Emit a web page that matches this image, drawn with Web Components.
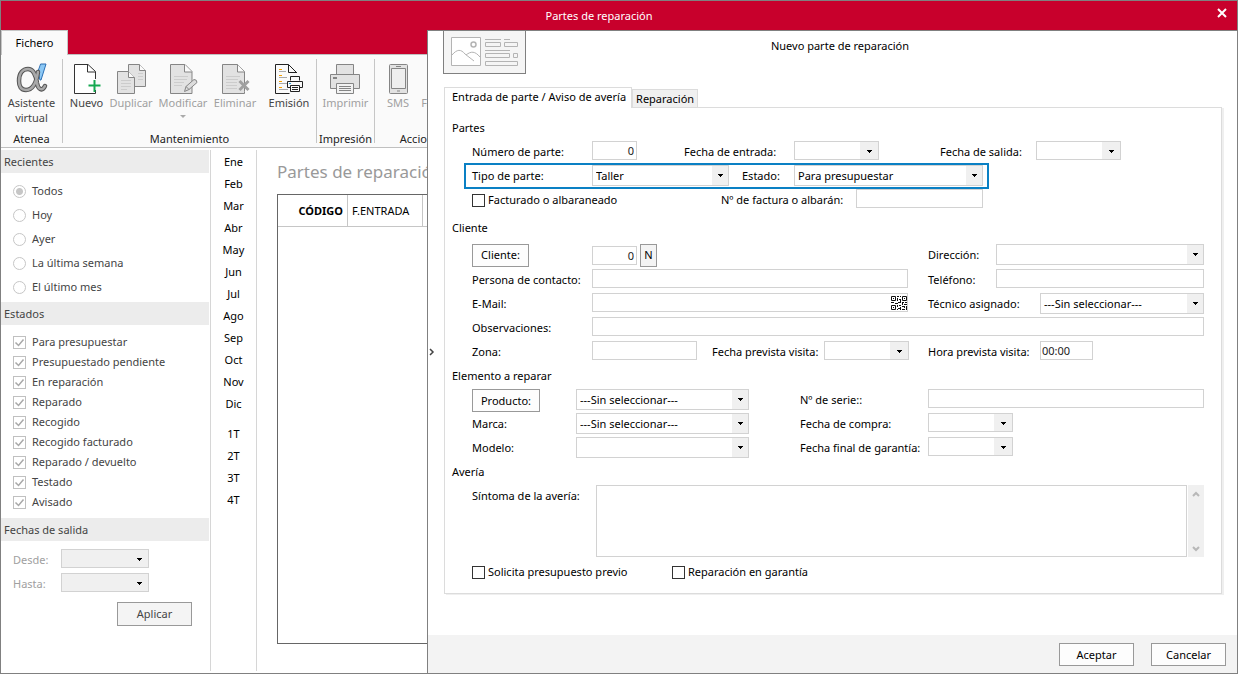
<!DOCTYPE html>
<html lang="es">
<head>
<meta charset="utf-8">
<title>Partes de reparación</title>
<style>
html, body { margin: 0; }
body { font: 11px/16px "Noto Sans", "Open Sans", sans-serif; color: #000; background: #fff; }
</style>
</head>
<body>
<app-window></app-window>

<script>
const define = (name, html, setup) => {
  const template = document.createElement('template');
  template.innerHTML = html;
  customElements.define(name, class extends HTMLElement {
    connectedCallback() {
      if (this.shadowRoot) return;
      this.attachShadow({ mode: 'open' }).append(template.content.cloneNode(true));
      if (setup) setup(this, this.shadowRoot);
    }
  });
};

/* Push button */
define('ui-button', `
<style>
:host { display: inline-block; width: 75px; }
button { display: block; box-sizing: border-box; width: 100%; height: var(--height, 23px); padding: 0; font: inherit; color: inherit;
  background: var(--face, #fdfdfd); border: 1px solid #999; white-space: nowrap; }
</style>
<button type="button"><slot></slot></button>`);

/* Labelled text box or drop-down */
define('ui-field', `
<style>
:host { display: flex; flex-shrink: 0; align-items: flex-start; min-width: 0; }
label { flex: none; width: var(--label, 120px); line-height: 24px; white-space: nowrap; }
label[hidden] { display: none; }
.box { display: grid; flex: var(--grow, none); width: var(--width, 85px); min-width: 0; margin-top: 1px; }
.box > * { grid-area: 1 / 1; }
input, select { appearance: none; box-sizing: border-box; width: 100%; min-width: 0; height: 19px; margin: 0; padding: 0 3px; font: inherit;
  color: #000; opacity: 1; background: var(--fill, #fff); border: 1px solid #d2d2d2; border-radius: 0; outline: 0; }
input.num { text-align: right; padding: 0 2px; color: #222; }
input.time { padding: 0 1px; color: #222; }
select.tall { height: 21px; }
svg { justify-self: end; width: 18px; height: 17px; margin: 1px; background: #f0f0f0; pointer-events: none; }
select.tall + svg { width: 16px; height: 19px; }
slot { display: flex; justify-self: end; }
</style>
<label for="c"></label>
<div class="box"></div>`, (el, root) => {
  const label = root.querySelector('label');
  const box = root.querySelector('.box');
  const kind = el.getAttribute('kind') || 'text';
  if (el.hasAttribute('label')) label.textContent = el.getAttribute('label');
  else label.hidden = true;
  const value = el.getAttribute('value') || '';
  if (kind === 'select' || kind === 'date') {
    const size = kind === 'select' ? '16 19' : '18 17';
    const start = kind === 'select' ? '6 8' : '7 8';
    box.innerHTML = `<select id="c"><option></option></select>
      <svg viewBox="0 0 ${size}"><path d="M${start}h5v1h-1v1h-1v1h-1v-1h-1v-1h-1z"/></svg>`;
    box.querySelector('option').textContent = value;
    if (kind === 'select') box.querySelector('select').className = 'tall';
  } else {
    box.innerHTML = '<input id="c" type="text"><slot></slot>';
    box.querySelector('input').value = value;
    box.querySelector('input').className = kind;
  }
  const control = box.firstElementChild;
  if (el.hasAttribute('name')) control.setAttribute('aria-label', el.getAttribute('name'));
  if (el.hasAttribute('disabled')) control.disabled = true;
});

/* Tick box with its caption */
define('ui-check', `
<style>
:host { display: block; }
label { display: flex; align-items: center; gap: var(--gap, 3px); height: var(--row, 24px); white-space: nowrap; }
span { display: grid; flex: none; }
span > * { grid-area: 1 / 1; }
input { appearance: none; box-sizing: border-box; width: 13px; height: 13px; margin: 0; background: #fff; border: 1px solid var(--line, #333); }
svg { width: 13px; height: 13px; fill: none; stroke: #a8a8a8; stroke-width: 1.5; pointer-events: none; visibility: hidden; }
input:checked + svg { visibility: visible; }
</style>
<label><span><input type="checkbox"><svg viewBox="0 0 13 13"><path d="M2.500 6.500l3 3 5-6"/></svg></span><slot></slot></label>`,
(el, root) => { root.querySelector('input').checked = el.hasAttribute('checked'); });

/* Group of exclusive options */
define('ui-radios', `
<style>
:host { display: block; }
label { display: flex; align-items: center; gap: 6px; height: 24px; }
input { appearance: none; box-sizing: border-box; width: 13px; height: 13px; margin: 0; border: 1px solid #c6c6c6; border-radius: 50%; background: #fff; }
input:checked { background: radial-gradient(circle, #c6c6c6 3px, #fff 4px); }
</style>`, (el, root) => {
  el.getAttribute('options').split('|').forEach((text, i) => {
    const label = document.createElement('label');
    const input = document.createElement('input');
    input.type = 'radio'; input.name = 'r'; input.checked = i === 0;
    label.append(input, text);
    root.append(label);
  });
});

/* Ribbon button: picture over caption */
define('ribbon-button', `
<style>
:host { display: block; flex: none; }
button { display: flex; flex-direction: column; align-items: center; width: 100%; padding: 8px 0 0; font: inherit; line-height: 15px;
  color: #444; background: none; border: 0; white-space: nowrap; }
:host([disabled]) button { color: #a0a0a0; }
.icon { display: flex; justify-content: center; height: 32px; }
</style>
<button type="button"><span class="icon"><slot name="icon"></slot></span><span><slot></slot></span></button>`,
(el, root) => { root.querySelector('button').disabled = el.hasAttribute('disabled'); });

define('ribbon-group', `
<style>
:host { display: flex; flex: none; flex-direction: column; justify-content: space-between; box-sizing: border-box; border-right: 1px solid #c6c6c6; margin: 4px 0; }
div { display: flex; margin-top: -4px; }
h2 { margin: 0 0 -4px; font: inherit; color: #222; text-align: center; line-height: 17px; white-space: nowrap; }
</style>
<div><slot></slot></div><h2></h2>`, (el, root) => { root.querySelector('h2').textContent = el.getAttribute('caption'); });

define('app-ribbon', `
<style>
:host { display: block; }
nav { display: flex; height: 24px; background: #c8002c; }
nav button { width: 67px; height: 25px; padding: 0; position: relative; font: inherit; background: #fafafa; border: 1px solid #c6c6c6; border-bottom: 0; z-index: 1; }
.groups { display: flex; box-sizing: border-box; height: 94px; overflow: hidden; background: #fafafa; border: 1px solid #c0c0c0; border-width: 1px 0; }
hr { width: 1px; height: 59px; margin: 10px 0 0 6px; border: 0; background: #ddd; }
.drop { display: block; margin: 5px auto 0; }
svg { overflow: visible; }
</style>
<nav><button type="button">Fichero</button></nav>
<div class="groups">
  <ribbon-group caption="Atenea" style="width:62px">
    <ribbon-button style="width:61px">
      <svg slot="icon" width="30" height="30" viewBox="0 0 30 30" fill="none" stroke-linecap="round">
        <path d="M24 1h5l-5 16h-1l-2-8z" fill="#8cc8f5" stroke="#2a6fb5"/>
        <path d="M21 9C19 22 15 27 9 27C4 27 2 23 2 18C2 10 6 6 11 6C17 6 19 13 20 20C21 26 25 29 28 23" stroke="#555" stroke-width="4.500"/>
        <path d="M21 9C19 22 15 27 9 27C4 27 2 23 2 18C2 10 6 6 11 6C17 6 19 13 20 20C21 26 25 29 28 23" stroke="#a9a9a9" stroke-width="2.500"/>
      </svg>Asistente<br>virtual
    </ribbon-button>
  </ribbon-group>
  <ribbon-group caption="Mantenimiento" style="width:254px">
    <ribbon-button style="width:47px">
      <svg slot="icon" width="28" height="31" viewBox="0 0 28 31" fill="none"><path d="M22.500 16V8.500L15 1.500H1.500v29h21V27" fill="#fff" stroke="#333"/><path d="M14.500 1.500v7.500h8" stroke="#333"/><path d="M21.500 17v12M15.500 22.500h12" stroke="#14a850" stroke-width="2"/></svg>Nuevo
    </ribbon-button>
    <ribbon-button disabled style="width:42px">
      <svg slot="icon" width="29" height="31" viewBox="0 0 29 31" fill="#e2e2e2" stroke="#858585"><path d="M11.500 1.500h11l6 6v16h-17z"/><path d="M22.500 1.500v6h6" fill="#fafafa"/><path d="M21 10.500h5M21 13.500h5M21 16.500h5" stroke="#ccc"/><path d="M.5 8.500h11l6 6v16H.5z"/><path d="M11.500 8.500v6h6" fill="#fafafa"/><path d="M4 17.500h10M4 20.500h10M4 23.500h10M4 26.500h6" stroke="#ccc"/></svg>Duplicar
    </ribbon-button>
    <ribbon-button disabled style="width:62px">
      <svg slot="icon" width="26" height="31" viewBox="0 0 26 31" fill="#e2e2e2" stroke="#858585"><path d="M.5 1.500H15l7 7v22H.5z"/><path d="M14.500 1.500V9H22" fill="#fafafa"/><path d="M4 13.500h14M4 16.500h13M4 19.500h10M4 22.500h8" stroke="#ccc"/><path d="M14.500 28.500l1.500-5 8-7q3 0 3 3l-8 7z" fill="#ddd"/><path d="M16 23.500l3 3" /></svg>Modificar<svg class="drop" width="6" height="3" viewBox="0 0 6 3"><path d="M0 0h6L3 3z" fill="#aaa"/></svg>
    </ribbon-button>
    <ribbon-button disabled style="width:42px">
      <svg slot="icon" width="26" height="31" viewBox="0 0 26 31" fill="#e2e2e2" stroke="#858585"><path d="M22.500 17V8.500l-7-7H.5v29h22v-2z"/><path d="M15.500 1.500V9h7" fill="#fafafa"/><path d="M4 13.500h14M4 16.500h12M4 19.500h11M4 22.500h11M4 25.500h11" stroke="#ccc"/><path d="M17.500 18l9 9M26.500 18l-9 9" stroke="#a0a0a0" stroke-width="3"/></svg>Eliminar
    </ribbon-button>
    <hr>
    <ribbon-button style="width:54px">
      <svg slot="icon" width="28" height="31" viewBox="0 0 28 31" fill="none" stroke="#222"><path d="M22 10L13.500 1.500H.5v29h14M13.500 1.500v8H22"/><path d="M4 6.500h3M4 12.500h3M4 18.500h3M4 24.500h3" stroke="#f5a000"/><path d="M4 8.500h7M4 14.500h8M4 20.500h8M4 26.500h9" stroke="#aaa"/><path d="M15.500 17.500v-4h9v4M12.500 24.500v-6h15v6h-3M15.500 24.500h-3M15.500 22.500h9v6h-9zM17 24.500h6M17 26.500h6"/><path d="M14 20.500h2" stroke="#28a0dc"/></svg>Emisión
    </ribbon-button>
  </ribbon-group>
  <ribbon-group caption="Impresión" style="width:58px">
    <ribbon-button disabled style="width:57px">
      <svg slot="icon" width="31" height="31" viewBox="0 0 31 31" fill="#e2e2e2" stroke="#858585"><path d="M6.500 1.500h17v10h-17zM.5 11.500h29v14H.5z"/><path d="M6.500 20.500h17v10h-17z" fill="#f2f2f2"/><path d="M3 15.500h4M3 14.500h4M9 23.500h12M9 25.500h12M9 27.500h12"/></svg>Imprimir
    </ribbon-button>
  </ribbon-group>
  <ribbon-group caption="Acciones" style="width:96px">
    <ribbon-button disabled style="width:46px">
      <svg slot="icon" width="19" height="31" viewBox="0 0 19 31" fill="#e2e2e2" stroke="#858585"><rect x=".5" y="1.500" width="18" height="29" rx="1"/><path d="M2.500 5.500h14v20h-14z" fill="#eee"/><path d="M7 3.500h5M8 28h3" /></svg>SMS
    </ribbon-button>
    <ribbon-button disabled style="width:18px"><svg slot="icon" width="1" height="31"></svg>Fax</ribbon-button>
  </ribbon-group>
</div>`);

define('filter-section', `
<style>
:host { display: block; color: #444; }
h3 { margin: 0; padding: 0 3px; font: inherit; line-height: 23px; background: #ececec; }
div { padding: var(--pad, 6px 12px 3px); }
</style>
<h3></h3><div><slot></slot></div>`, (el, root) => { root.querySelector('h3').textContent = el.getAttribute('caption'); });

define('filter-panel', `
<style>
:host { display: block; width: 208px; flex: none; }
ui-check { --line: #c0c0c0; --gap: 6px; --row: 20px; }
ui-field { --label: 48px; --width: 88px; --fill: #f0f0f0; color: #a0a0a0; }
.states { --pad: 7px 12px 6px; }
.dates { --pad: 7px 12px; }
ui-button { --face: #f4f4f4; --height: 24px; display: block; margin: 6px 0 0 104px; }
</style>
<filter-section caption="Recientes"><ui-radios options="Todos|Hoy|Ayer|La última semana|El último mes"></ui-radios></filter-section>
<filter-section caption="Estados" class="states">
  <ui-check checked>Para presupuestar</ui-check><ui-check checked>Presupuestado pendiente</ui-check><ui-check checked>En reparación</ui-check>
  <ui-check checked>Reparado</ui-check><ui-check checked>Recogido</ui-check><ui-check checked>Recogido facturado</ui-check>
  <ui-check checked>Reparado / devuelto</ui-check><ui-check checked>Testado</ui-check><ui-check checked>Avisado</ui-check>
</filter-section>
<filter-section caption="Fechas de salida" class="dates">
  <ui-field kind="date" label="Desde:" disabled></ui-field>
  <ui-field kind="date" label="Hasta:" disabled></ui-field>
  <ui-button>Aplicar</ui-button>
</filter-section>`);

define('period-list', `
<style>
:host { display: block; box-sizing: border-box; flex: none; width: 47px; margin: 0 0 2px 1px; padding-top: 1px; border: 1px solid #d6d6d6; border-width: 0 1px; }
ul { margin: 0 0 8px; padding: 0; list-style: none; }
a { display: block; line-height: 22px; text-align: center; color: #000; text-decoration: none; }
</style>`, (el, root) => {
  ['Ene Feb Mar Abr May Jun Jul Ago Sep Oct Nov Dic', '1T 2T 3T 4T'].forEach(set => {
    const list = document.createElement('ul');
    list.innerHTML = set.split(' ').map(t => `<li><a href="#${t}">${t}</a></li>`).join('');
    root.append(list);
  });
});

define('order-grid', `
<style>
:host { display: flex; flex-direction: column; flex: 1; min-width: 0; padding: 0 0 29px 20px; }
h1 { margin: 0; font-size: 17px; line-height: 43px; font-weight: 400; color: #999; white-space: nowrap; }
div { flex: 1; border: 1px solid #666; border-right: 0; margin-top: 1px; }
table { width: 100%; border-collapse: collapse; table-layout: fixed; }
th { height: 31px; padding: 0 4px; font-weight: 400; text-align: left; border: 1px solid #c6c6c6; border-width: 0 1px 1px 0; }
td { border-bottom: 1px solid #c6c6c6; padding: 0; }
th:first-child { width: 61px; text-align: right; font-weight: 700; }
th:nth-child(2) { width: 66px; }
</style>
<h1>Partes de reparación</h1>
<div><table><thead><tr><th>CÓDIGO</th><th>F.ENTRADA</th><td></td></tr></thead></table></div>`);

define('tab-panel', `
<style>
:host { display: block; }
nav { display: flex; align-items: flex-end; }
button { height: 18px; padding: 0 4px; font: inherit; background: #f0f0f0; border: 1px solid #dcdcdc; border-bottom: 0; white-space: nowrap; }
button + button { padding: 0 3px; }
button[aria-selected=true] { position: relative; height: 21px; margin-bottom: -1px; padding: 0 5px 2px 7px; background: #fff; }
section { padding: 8px 17px 9px 7px; border: 1px solid #dcdcdc; box-shadow: 2px 1px #efefef; }
</style>
<nav role="tablist"><button type="button" role="tab" aria-selected="true">Entrada de parte / Aviso de avería</button><button type="button" role="tab">Reparación</button></nav>
<section><slot></slot></section>`);

define('repair-form', `
<style>
:host { display: block; }
fieldset { margin: 0; padding: 0 0 0 20px; border: 0; min-width: 0; }
legend { margin-left: -20px; padding: 0; line-height: 24px; }
.first { margin-bottom: 4px; }
.row { display: flex; align-items: flex-start; min-height: 24px; }
.pair { display: grid; grid-template-columns: minmax(0, 436fr) minmax(0, 276fr); column-gap: 20px; }
.item { display: grid; grid-template-columns: minmax(0, 277fr) minmax(0, 404fr); column-gap: 51px; }
.tall { min-height: 26px; padding-top: 2px; align-items: center; }
.tall > div { display: flex; align-items: center; }
.fill { --grow: 1; }
.mark { position: relative; width: fit-content; margin-left: -7px; padding: 0 5px 0 7px; outline: 2px solid #0a80c4; outline-offset: -1px; background: #fff; z-index: 1; }
.short { --width: 45px; }
.right { --label: 68px; }
.wide { --label: 112px; }
.elem { --label: 104px; }
.serial { --label: 128px; }
.qr { width: 17px; height: 17px; margin: 1px 0; }
.memo { display: flex; min-height: 76px; }
.memo label { flex: none; width: 124px; line-height: 24px; }
.area { display: flex; flex: 1; gap: 1px; margin-top: 1px; height: 72px; }
textarea { flex: 1; box-sizing: border-box; margin: 0; padding: 3px; font: inherit; resize: none; border: 1px solid #d2d2d2; overflow: hidden; outline: 0; }
.bar { display: flex; flex-direction: column; justify-content: space-between; align-items: center; width: 16px; box-sizing: border-box; padding: 6px 0 5px; background: #f0f0f0; }
.bar svg { fill: none; stroke: #b8b8b8; stroke-width: 2; }
</style>
<fieldset class="first"><legend>Partes</legend>
  <div class="row">
    <ui-field kind="num" class="short" label="Número de parte:" value="0" style="margin-right:47px"></ui-field>
    <ui-field kind="date" label="Fecha de entrada:" style="--label:110px;margin-right:61px"></ui-field>
    <ui-field kind="date" label="Fecha de salida:" style="--label:96px"></ui-field>
  </div>
  <div class="row mark">
    <ui-field kind="select" label="Tipo de parte:" value="Taller" style="--width:137px;margin-right:13px"></ui-field>
    <ui-field kind="select" label="Estado:" value="Para presupuestar" style="--label:52px;--width:189px"></ui-field>
  </div>
  <div class="row">
    <ui-check style="width:249px">Facturado o albaraneado</ui-check>
    <ui-field label="Nº de factura o albarán:" style="--label:135px;--width:127px"></ui-field>
  </div>
</fieldset>
<fieldset><legend>Cliente</legend>
  <div class="pair tall">
    <div><ui-button style="width:57px;margin-right:63px">Cliente:</ui-button><ui-field kind="num" class="short" name="Cliente" value="0" style="margin-right:3px"></ui-field><ui-button style="width:17px;--face:#f4f4f4">N</ui-button></div>
    <ui-field kind="select" class="right fill" label="Dirección:"></ui-field>
  </div>
  <div class="row pair">
    <ui-field class="fill" label="Persona de contacto:"></ui-field>
    <ui-field class="right fill" label="Teléfono:"></ui-field>
  </div>
  <div class="row pair">
    <ui-field class="fill" label="E-Mail:"><svg class="qr" viewBox="0 -1 17 17" fill="none" stroke="#111"><path d="M.5 1.500h4v4h-4zM11.500 1.500h4v4h-4zM.5 10.500h4v4h-4zM2 3.500h1M13 3.500h1M2 12.500h1M6 1.500h2M9 1.500h1M6.500 3v3M8 4.500h2M9.500 5v3M0 7.500h3M4 8.500h3M7 7.500h2M11 7.500h2M14 7.500h2M11.500 8v2M13 9.500h3M6.500 10v2M8 10.500h2M7 13.500h2M6 14.500h1M9.500 12v3M11 11.500h2M13.500 11v2M15.500 11v4M11 14.500h3"/></svg></ui-field>
    <ui-field kind="select" class="wide fill" label="Técnico asignado:" value="---Sin seleccionar---"></ui-field>
  </div>
  <div class="row"><ui-field class="fill" label="Observaciones:" style="flex:1"></ui-field></div>
  <div class="row pair">
    <div class="row"><ui-field label="Zona:" style="--width:105px;margin-right:15px"></ui-field><ui-field kind="date" class="wide" label="Fecha prevista visita:"></ui-field></div>
    <ui-field kind="time" class="wide" label="Hora prevista visita:" value="00:00" style="--width:53px"></ui-field>
  </div>
</fieldset>
<fieldset><legend>Elemento a reparar</legend>
  <div class="row item">
    <div class="row"><ui-button style="width:68px;margin:1px 36px 0 0">Producto:</ui-button><ui-field kind="select" class="fill" name="Producto" value="---Sin seleccionar---" style="flex:1"></ui-field></div>
    <ui-field class="serial fill" label="Nº de serie::"></ui-field>
  </div>
  <div class="row item">
    <ui-field kind="select" class="elem fill" label="Marca:" value="---Sin seleccionar---"></ui-field>
    <ui-field kind="date" class="serial" label="Fecha de compra:"></ui-field>
  </div>
  <div class="row item">
    <ui-field kind="select" class="elem fill" label="Modelo:"></ui-field>
    <ui-field kind="date" class="serial" label="Fecha final de garantía:"></ui-field>
  </div>
</fieldset>
<fieldset><legend>Avería</legend>
  <div class="memo"><label for="memo">Síntoma de la avería:</label>
    <div class="area"><textarea id="memo"></textarea>
      <div class="bar"><svg width="8" height="6"><path d="M1 5l3-3 3 3"/></svg><svg width="8" height="6"><path d="M1 1l3 3 3-3"/></svg></div></div>
  </div>
  <div class="row"><ui-check style="width:200px">Solicita presupuesto previo</ui-check><ui-check>Reparación en garantía</ui-check></div>
</fieldset>`);

define('repair-dialog', `
<style>
:host { display: grid; grid-template: auto 1fr auto / 16px 1fr; min-width: 0; background: #fff; border: 1px solid #808080; border-width: 1px 0 0 1px; }
header { display: grid; grid-area: 1 / 2; height: 56px; margin-left: -1px; }
header > * { grid-area: 1 / 1; }
.card { justify-self: start; box-sizing: border-box; width: 83px; height: 43px; background: #f5f5f5; border: 1px solid #808080; border-top: 0; }
h2 { margin: 0; font: inherit; line-height: 30px; text-align: center; }
.handle { grid-area: 1 / 1 / 4 / 2; align-self: center; padding: 4px 1px; border: 0; background: none; justify-self: start; z-index: 1; }
.handle svg { display: block; }
main { grid-area: 2 / 2; padding: 0 15px 40px 0; }
footer { grid-area: 3 / 1 / 4 / 3; display: flex; justify-content: flex-end; gap: 17px; padding: 8px 11px 7px; background: #f3f3f3; }
</style>
<header>
  <svg class="card" viewBox="0 0 81 42" fill="none" stroke="#b4b4b4"><path d="M7.500 6.500h29v28h-29z" fill="#fff"/><circle cx="29.500" cy="13.500" r="2.500" stroke-width="1.500"/><path d="M8 24c5-6 9-6 13-1l9 7M22 24c5-4 9-4 14 2"/><path d="M41 8.500h16M60 8.500h6M41.500 11.500h15v4h-15zM60.500 11.500h13v4h-13zM41 19.500h25M41.500 22.500h24v4h-24zM69.500 22.500h4v4h-4zM41.500 30.500h32v4h-32z"/></svg>
  <h2>Nuevo parte de reparación</h2>
</header>
<button type="button" class="handle" aria-label="Plegar"><svg width="6" height="8" fill="none" stroke="#444" stroke-width="1.500"><path d="M1 1l3 3-3 3"/></svg></button>
<main><tab-panel><repair-form></repair-form></tab-panel></main>
<footer><ui-button>Aceptar</ui-button><ui-button>Cancelar</ui-button></footer>`);

define('app-window', `
<style>
:host { display: flex; flex-direction: column; box-sizing: border-box; min-height: 100vh; border: 1px solid #808080; background: #fff; }
header { display: flex; align-items: center; height: 29px; color: #fff; background: #c8002c; }
h1 { flex: 1; margin: 0; font: inherit; text-align: center; }
header button { width: 40px; height: 24px; padding: 0 0 4px 10px; border: 0; background: none; }
.body { display: grid; flex: 1; grid-template: 1fr / 426px minmax(0, 1fr); }
.under { display: flex; flex-direction: column; min-width: 0; overflow: hidden; }
app-ribbon { margin-bottom: 2px; }
.cols { display: flex; flex: 1; }
</style>
<header><h1>Partes de reparación</h1><button type="button" aria-label="Cerrar"><svg width="10" height="10" stroke="#fff" stroke-width="2"><path d="M1 1l8 8M9 1l-8 8"/></svg></button></header>
<div class="body">
  <div class="under">
    <app-ribbon></app-ribbon>
    <div class="cols"><filter-panel></filter-panel><period-list></period-list><order-grid></order-grid></div>
  </div>
  <repair-dialog></repair-dialog>
</div>`);
</script>
</body>
</html>
